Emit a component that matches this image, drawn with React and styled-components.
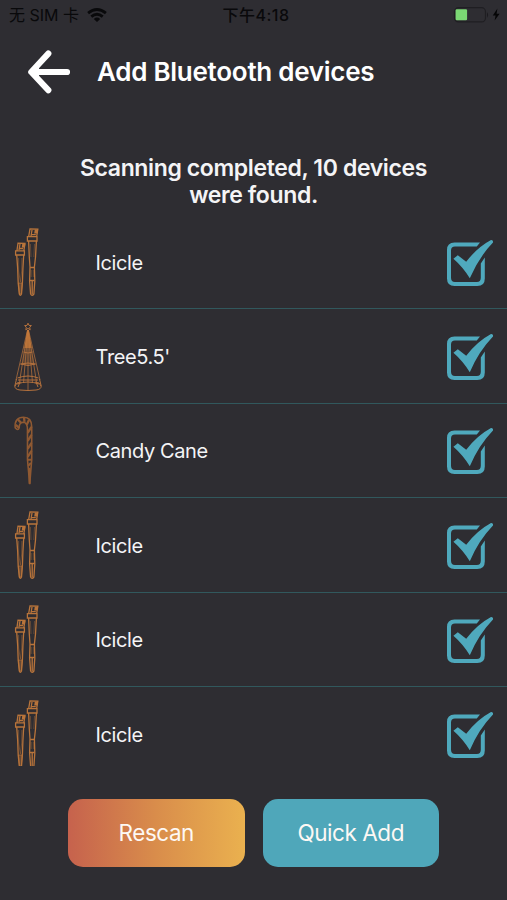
import React from "react";
import styled, { createGlobalStyle } from "styled-components";

const Global = createGlobalStyle`
  * { box-sizing: border-box; }
  body { margin: 0; background: #2e2d32; }
`;

const Screen = styled.main`
  width: 507px;
  height: 900px;
  overflow: hidden;
  display: flex;
  flex-direction: column;
  background: #2e2d32;
  color: #f4f4f6;
  font-family: Inter, "Noto Sans CJK SC", sans-serif;
`;

const StatusBar = styled.div`
  height: 30px;
  flex: none;
  display: grid;
  grid-template-columns: 1fr auto 1fr;
  align-items: center;
  padding: 0 6px 0 9px;
  color: #09090b;
  font-size: 16px;
  line-height: 30px;
`;

const Carrier = styled.div`
  display: flex;
  align-items: center;
  gap: 8px;
  letter-spacing: 0;
  white-space: nowrap;
`;

const Clock = styled.div`
  font-weight: 500;
  font-size: 16px;
  letter-spacing: 0.5px;
  padding-left: 2px;
`;

const Power = styled.div`
  display: flex;
  justify-content: flex-end;
`;

const Header = styled.header`
  height: 83px;
  flex: none;
  display: flex;
  align-items: center;
  padding-left: 27px;
  gap: 26px;
`;

const BackButton = styled.button`
  border: 0;
  padding: 0;
  background: none;
  width: 44px;
  height: 44px;
`;

const Title = styled.h1`
  margin: 0;
  font-size: 26px;
  font-weight: 600;
  letter-spacing: -0.27px;
  color: #fff;
  white-space: nowrap;
`;

const Message = styled.p`
  margin: 42px 0 0;
  height: 60px;
  flex: none;
  text-align: center;
  font-size: 23px;
  line-height: 27px;
  font-weight: 600;
  letter-spacing: -0.37px;
`;

const List = styled.ul`
  margin: 0;
  padding: 0;
  list-style: none;
  height: 551px;
  flex: none;
  overflow: hidden;
`;

const Row = styled.li`
  height: 94.4px;
  display: flex;
  align-items: center;
  padding: 0 14px 0 13px;
  border-bottom: 1px solid #31585d;
`;

const Picture = styled.span`
  width: 30px;
  height: 72px;
  margin-right: 52.5px;
`;

const Name = styled.span`
  flex: 1;
  font-size: 20px;
  line-height: 28px;
  padding-top: 2px;
  letter-spacing: -0.4px;
`;

const Actions = styled.footer`
  display: flex;
  justify-content: center;
  gap: 18px;
  padding-top: 33px;
`;

const ActionButton = styled.button`
  border: 0;
  width: 176.5px;
  height: 67.5px;
  border-radius: 15px;
  padding: 0;
  color: #fdf8f4;
  font: 400 22.5px Inter, sans-serif;
  letter-spacing: -0.45px;
  background: ${(p) =>
    p.$warm ? "linear-gradient(90deg, #c6624d, #d98d4b 50%, #eab14f)" : "#4fa7ba"};
`;

const Svg = styled.svg`
  display: block;
  overflow: visible;
`;

const WifiIcon = () => (
  <Svg width="20" height="15" viewBox="0 0 20 15" fill="none" stroke="#09090b" strokeWidth="2.8">
    <path d="M1.1 5.2Q10-2.2 18.9 5.2" />
    <path d="M4.3 8.6Q10 3.8 15.7 8.6" />
    <path d="M6.8 10.9Q10 8.1 13.2 10.9L10 14Z" fill="#09090b" stroke="none" />
  </Svg>
);

const BatteryIcon = () => (
  <Svg width="48" height="16" viewBox="0 0 48 16">
    <rect x="1.5" y=".7" width="31" height="14.2" rx="4" fill="none" stroke="#1f1e22" strokeWidth="1.2" />
    <path d="M34 5.3q2.2 2.7 0 5.4z" fill="#1c1b1f" />
    <rect x="2.6" y="2.3" width="11.5" height="11" rx="1.2" fill="#7bd874" />
    <path d="M44.4 1.6 39.8 8.4H42.6L41.6 13.6 46.6 6.7H43.6Z" fill="#050506" />
  </Svg>
);

const BackIcon = () => (
  <Svg width="44" height="44" viewBox="0 0 44 44" fill="none" stroke="#fff" strokeWidth="6.2" strokeLinecap="round" strokeLinejoin="round">
    <path d="M21.3 3.6 4.3 22 21.3 40.2M5 22H40" />
    <path d="M4.3 22 11 16V28Z" fill="#fff" strokeWidth="2" />
  </Svg>
);

const CheckIcon = () => (
  <Svg width="48" height="48" viewBox="0 0 48 48">
    <path d="M10 4.6H35L31.8 8.4H10Q6 8.4 6 12.6V39.8Q6 44 10 44H31.8Q35.8 44 35.8 39.8V25.5L39.8 19.5V40.5Q39.8 48 32.3 48H9.5Q2 48 2 40.5V12.1Q2 4.6 9.5 4.6Z" fill="#4fa9bd" />
    <path d="M8.4 20.8 12.8 17.2 21.2 23.8Q32 9.5 46 2Q48.4 1.8 48 4.6Q34 19 24.8 40.2Q17.5 28.7 8.4 20.8Z" fill="#4fa9bd" />
  </Svg>
);

const IcicleArt = () => (
  <Svg width="30" height="72" viewBox="0 0 30 72" fill="none" stroke="#b8743b" strokeWidth="1.3">
    <path d="M15.7 10.3 17 3 24.8 3.2 23.7 10.3M14.4 10.6H24V15H14.4ZM19 4 18 10M18.5 8.6H22.8" />
    <path d="M21.8 3.4H25.2L24.4 7.4H21.2Z" fill="#b8743b" stroke="none" />
    <path d="M15.6 15 16.3 31 17 41 16.6 55 17.6 68Q19 70.5 20.9 68L21.8 55 21.4 41 22.5 31 23.4 15" />
    <path d="M17.2 41.5H21.3M17 54.5H21.5M19.2 55V68" />
    <path d="M17.4 18 18 31M21.5 18 20.8 31M18.2 44V51M20.3 44V51" strokeWidth=".6" opacity=".65" />
    <path d="M4 24.3 5 17.2 12 17.4 10.9 24.3M2.6 24.8H11.4V29H2.6ZM7 18 6 24M6.8 22.5H10" />
    <path d="M9.2 17.7H12.4L11.8 21.5H8.8Z" fill="#b8743b" stroke="none" />
    <path d="M3.7 29 4.7 43 5.2 57 6.3 68Q7.3 70.5 8.5 68L9.4 57 9.9 43 10.7 29" />
    <path d="M5.6 32 5.7 45 7.3 56 8.7 45 8.9 32" strokeWidth=".6" opacity=".7" />
    <path d="M5.4 57H9.2L8.3 68H6.5Z" fill="#b8743b" fillOpacity=".4" strokeWidth=".7" />
  </Svg>
);

const TreeArt = () => (
  <Svg width="30" height="72" viewBox="0 0 30 72" fill="none" stroke="#b4713d" strokeWidth="1">
    <path d="M15 3.2 16 5.4 18.4 5.6 16.7 7.2 17.2 9.8 15 8.4 12.8 9.8 13.3 7.2 11.6 5.6 14 5.4Z" />
    <path d="M14.5 10 3 60M15.5 10 27 60M14.7 10 6.5 62M15.3 10 23.5 62M14.8 10 10.5 63M15.2 10 19.5 63M15 10V70" strokeWidth="0.75" />
    <path d="M14.3 10H15.7L19.5 32 22 45H8L10.5 32Z" fill="#b8743b" stroke="none" opacity=".28" />
    <path d="M14.3 10H15.7L18.7 28H11.3Z" fill="#d07e39" stroke="none" opacity=".65" />
    <path d="M10.5 32Q15 34 19.5 32M7.5 44Q15 42 22.5 44Q15 47 7.5 44M4.5 58Q15 54 25.5 58M5 60H25M4 64Q15 60 26 64" />
    <path d="M3.5 59 1.8 66Q1.8 69.5 7 70Q15 71 23 70Q28.2 69.5 28.2 66L26.5 59M2 66Q3 62 8 62M28 66Q27 62 22 62M7 62 5 67M23 62 25 67" />
  </Svg>
);

const CaneArt = () => (
  <Svg width="30" height="72" viewBox="0 0 30 72" fill="none" stroke="#8f5932">
    <g transform="translate(0 1.8)">
      <path d="M2.2 12Q1.2 1.5 10.5 1.5Q18.7 1.5 18.7 11V44L16.7 68.5 14.5 44V14Q14.5 6.5 10 6.5Q6 7 6.2 12Q5 15.5 2.2 12Z" strokeWidth="1.6" />
      <path d="M2.7 9 6.2 12M5 3.8 8 7M11 1.7 11.5 6M16 4.3 13.7 9M18.5 11 14.7 17M18.5 19 14.7 25M18.5 27 14.7 33M18.5 35 14.7 41" strokeWidth="2.3" />
      <path d="M14.5 44H18.7M15.3 50 17.8 47M16.6 52V68" strokeWidth="2" />
    </g>
  </Svg>
);

const art = { icicle: IcicleArt, tree: TreeArt, cane: CaneArt };

const devices = [
  { name: "Icicle", kind: "icicle" },
  { name: "Tree5.5'", kind: "tree" },
  { name: "Candy Cane", kind: "cane" },
  { name: "Icicle", kind: "icicle" },
  { name: "Icicle", kind: "icicle" },
  { name: "Icicle", kind: "icicle" },
];

export default function App() {
  return (
    <>
      <Global />
      <Screen>
        <StatusBar>
          <Carrier>无 SIM 卡<WifiIcon /></Carrier>
          <Clock>下午4:18</Clock>
          <Power><BatteryIcon /></Power>
        </StatusBar>
        <Header>
          <BackButton aria-label="Back"><BackIcon /></BackButton>
          <Title>Add Bluetooth devices</Title>
        </Header>
        <Message>Scanning completed, 10 devices<br />were found.</Message>
        <List>
          {devices.map((device, index) => {
            const Art = art[device.kind];
            return (
              <Row key={index}>
                <Picture><Art /></Picture>
                <Name>{device.name}</Name>
                <CheckIcon />
              </Row>
            );
          })}
        </List>
        <Actions>
          <ActionButton $warm>Rescan</ActionButton>
          <ActionButton>Quick Add</ActionButton>
        </Actions>
      </Screen>
    </>
  );
}
